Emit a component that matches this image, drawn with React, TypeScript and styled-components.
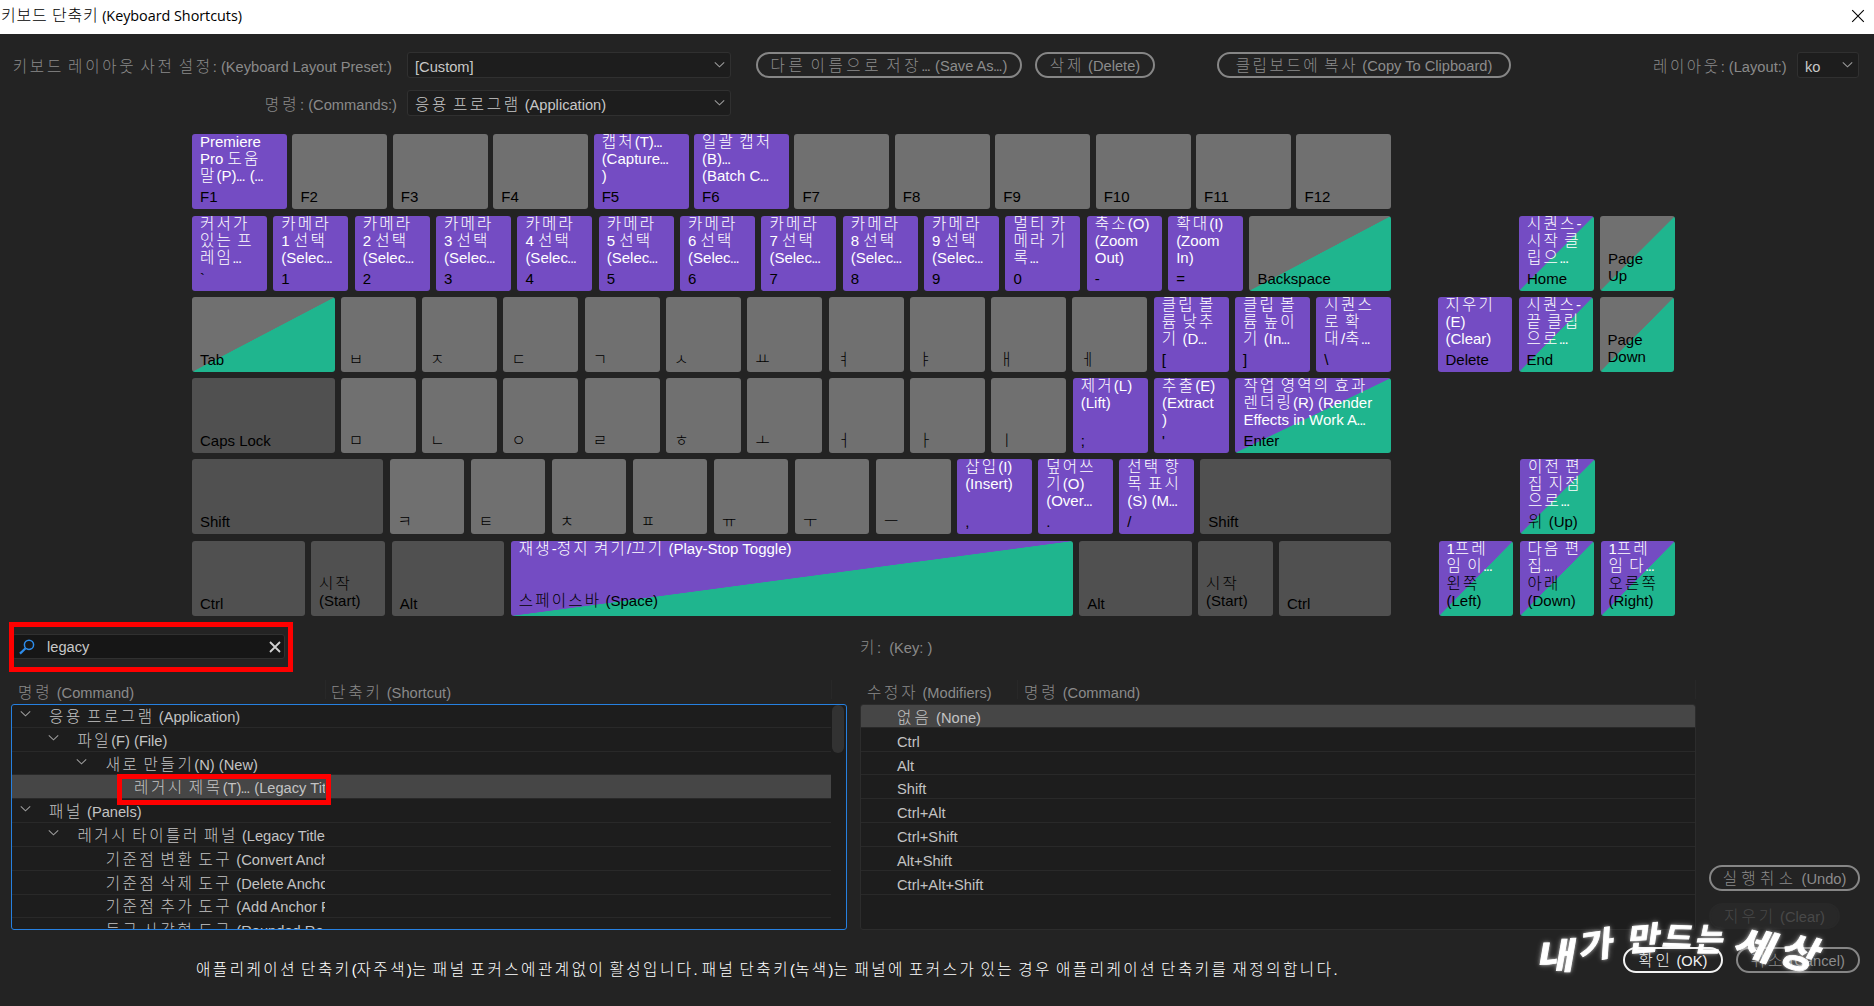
import React from "react";
import styled, { createGlobalStyle } from "styled-components";

const PURPLE = "#744cc3";
const GREEN = "#1fb58e";
const GRAY = "#707070";
const DARK = "#505050";

const Global = createGlobalStyle`
  * { box-sizing: border-box; }
  html, body { margin: 0; padding: 0; background: #232323; overflow: hidden; }
  body { font-family: "Liberation Sans", Arial, "Noto Sans CJK KR", sans-serif; font-size: 14.67px; }
`;

/* ---------- text ---------- */

const Line = styled.span`
  white-space: pre;
`;

const Hangul = styled.span<{ $gap: number }>`
  font-family: "Noto Sans CJK KR", sans-serif;
  font-weight: 300;
  font-size: 15.6px;
  line-height: 0;
  letter-spacing: ${(p) => p.$gap + 0.37}px;
`;

const Dots = styled.span`
  letter-spacing: -1.3px;
  margin: 0 1.3px 0 -0.8px;
`;

function Text({ children, gap = 2.2 }: { children: string; gap?: number }) {
  const parts = children.split(/([\u3130-\u318f\uac00-\ud7a3]+|\.\.\.)/);
  return (
    <Line>
      {parts.map((part, i) => {
        if (i % 2 === 0) return part;
        if (part === "...") return <Dots key={i}>{part}</Dots>;
        return (
          <Hangul key={i} $gap={gap}>
            {part}
          </Hangul>
        );
      })}
    </Line>
  );
}

/* ---------- window ---------- */

const Window = styled.div`
  position: relative;
  width: 1874px;
  height: 1006px;
  background: #232323;
  display: flex;
  flex-direction: column;
  overflow: hidden;
`;

const TitleBar = styled.header`
  height: 34px;
  flex: none;
  background: #fff;
  color: #000;
  display: flex;
  justify-content: space-between;
  align-items: center;
  padding: 0 9px 3px 1px;
  font-family: "Open Sans", "Noto Sans CJK KR", sans-serif;
  font-size: 14.4px;
  letter-spacing: -0.04px;
`;

const TitleHangul = styled.span`
  font-family: "Noto Sans CJK KR", sans-serif;
  font-weight: 300;
  font-size: 16px;
  line-height: 0;
  letter-spacing: 0.8px;
`;

/* ---------- toolbar ---------- */

const Toolbar = styled.section`
  height: 100px;
  flex: none;
  padding-top: 18px;
  display: flex;
  flex-direction: column;
  gap: 12px;
  color: #8a8a8a;
`;

const ToolRow = styled.div`
  display: flex;
  height: 26px;
  align-items: center;
`;

const FieldLabel = styled.label<{ $end: number }>`
  width: 407px;
  padding: 3px ${(p) => p.$end}px 0 0;
  text-align: right;
`;

const Select = styled.div<{ $w: number }>`
  width: ${(p) => p.$w}px;
  height: 26px;
  background: #1d1d1d;
  border: 1px solid #303030;
  border-radius: 3px;
  color: #c8c8c8;
  display: flex;
  align-items: center;
  justify-content: space-between;
  padding: 4px 5px 0 7px;

  svg {
    margin-top: -4px;
  }
`;

const Pill = styled.button<{ $w: number; $tone?: "primary" | "off"; $ml?: number }>`
  flex: none;
  width: ${(p) => p.$w}px;
  height: 26px;
  margin: 0 0 0 ${(p) => p.$ml ?? 0}px;
  padding: 3px 0 0;
  border-radius: 13px;
  border: 2px solid
    ${(p) => (p.$tone === "primary" ? "#f2f2f2" : p.$tone === "off" ? "#282828" : "#868686")};
  background: ${(p) => (p.$tone === "off" ? "#282828" : "transparent")};
  color: ${(p) => (p.$tone === "primary" ? "#f2f2f2" : p.$tone === "off" ? "#484848" : "#8c8c8c")};
  font: inherit;
  line-height: 17px;
  display: flex;
  align-items: center;
  justify-content: center;
`;

const LayoutLabel = styled.span`
  margin-left: 142px;
  width: 144px;
  padding-top: 3px;
`;

function Chevron() {
  return (
    <svg width="11" height="8" viewBox="0 0 11 8" fill="none" stroke="#9a9a9a" strokeWidth="1.1">
      <path d="M0.8 1.3 5.5 5.8 10.2 1.3" />
    </svg>
  );
}

/* ---------- keyboard ---------- */

type Fill = "gray" | "dark" | "purple" | "grayGreen" | "purpleGreen";

interface KeyDef {
  name: string[];
  cmd?: string[];
  w?: number;
  fill?: Fill;
  raised?: boolean;
}

const fills: Record<Fill, string> = {
  gray: GRAY,
  dark: DARK,
  purple: PURPLE,
  grayGreen: `linear-gradient(to bottom right, ${GRAY} 49.8%, ${GREEN} 50.2%)`,
  purpleGreen: `linear-gradient(to bottom right, ${PURPLE} 49.8%, ${GREEN} 50.2%)`,
};

const Keyboard = styled.section`
  height: 482px;
  flex: none;
  padding-left: 192px;
  display: grid;
  grid-template-rows: 82px 81px 81px 81px 82px 75px;
`;

const KeyRow = styled.div`
  display: flex;
  height: 75px;
`;

const MainKeys = styled.div`
  width: 1199.5px;
  display: flex;
  justify-content: space-between;
`;

const NavKeys = styled.div<{ $ml: number }>`
  display: flex;
  gap: 6.5px;
  margin-left: ${(p) => p.$ml}px;
`;

const KeyCap = styled.div<{ $w: number; $fill: Fill; $raised?: boolean }>`
  flex: none;
  width: ${(p) => p.$w}px;
  height: 75px;
  border-radius: 3px;
  background: ${(p) => fills[p.$fill]};
  overflow: hidden;
  padding: 0 0 ${(p) => (p.$raised ? 7 : 4)}px 8px;
  display: flex;
  flex-direction: column;
  justify-content: space-between;
  font-size: 15px;
  line-height: 17px;
`;

const KeyLines = styled.div<{ $ink: string; $up?: number }>`
  display: flex;
  flex-direction: column;
  color: ${(p) => p.$ink};
  margin-top: ${(p) => -(p.$up ?? 0)}px;
`;

function Key({ k, w }: { k: KeyDef; w: number }) {
  return (
    <KeyCap $w={k.w ?? w} $fill={k.fill ?? (k.cmd ? "purple" : "gray")} $raised={k.raised}>
      <KeyLines $ink="#fff" $up={1}>
        {(k.cmd ?? []).map((line) => (
          <Text key={line} gap={1.8}>
            {line}
          </Text>
        ))}
      </KeyLines>
      <KeyLines $ink="#000">
        {k.name.map((line) => (
          <Text key={line} gap={1.8}>
            {line}
          </Text>
        ))}
      </KeyLines>
    </KeyCap>
  );
}

const plain = (names: string): KeyDef[] => names.split(" ").map((n) => ({ name: [n] }));

const camera = (n: number): KeyDef => ({
  name: [String(n)],
  cmd: ["카메라", `${n} 선택`, "(Selec..."],
});

interface RowDef {
  w: number;
  main: KeyDef[];
  nav?: KeyDef[];
  navOffset?: number;
}

const rows: RowDef[] = [
  {
    w: 95,
    main: [
      { name: ["F1"], cmd: ["Premiere", "Pro 도움", "말(P)... (..."] },
      ...plain("F2 F3 F4"),
      { name: ["F5"], cmd: ["캡처(T)...", "(Capture...", ")"] },
      { name: ["F6"], cmd: ["일괄 캡처", "(B)...", "(Batch C..."] },
      ...plain("F7 F8 F9 F10 F11 F12"),
    ],
  },
  {
    w: 75,
    main: [
      { name: ["`"], cmd: ["커서가", "있는 프", "레임..."] },
      ...[1, 2, 3, 4, 5, 6, 7, 8, 9].map(camera),
      { name: ["0"], cmd: ["멀티 카", "메라 기", "록..."] },
      { name: ["-"], cmd: ["축소(O)", "(Zoom", "Out)"] },
      { name: ["="], cmd: ["확대(I)", "(Zoom", "In)"] },
      { name: ["Backspace"], w: 142, fill: "grayGreen" },
    ],
    navOffset: 127.5,
    nav: [
      { name: ["Home"], cmd: ["시퀀스-", "시작 클", "립으..."], fill: "purpleGreen" },
      { name: ["Page", "Up"], fill: "grayGreen", raised: true },
    ],
  },
  {
    w: 75,
    main: [
      { name: ["Tab"], w: 142.5, fill: "grayGreen" },
      ...plain("ㅂ ㅈ ㄷ ㄱ ㅅ ㅛ ㅕ ㅑ ㅐ ㅔ"),
      { name: ["["], cmd: ["클립 볼", "륨 낮추", "기 (D..."] },
      { name: ["]"], cmd: ["클립 볼", "륨 높이", "기 (In..."] },
      { name: ["\\"], cmd: ["시퀀스", "로 확", "대/축..."] },
    ],
    navOffset: 46,
    nav: [
      { name: ["Delete"], cmd: ["지우기", "(E)", "(Clear)"] },
      { name: ["End"], cmd: ["시퀀스-", "끝 클립", "으로..."], fill: "purpleGreen" },
      { name: ["Page", "Down"], fill: "grayGreen", raised: true },
    ],
  },
  {
    w: 75,
    main: [
      { name: ["Caps Lock"], w: 142.5, fill: "dark" },
      ...plain("ㅁ ㄴ ㅇ ㄹ ㅎ ㅗ ㅓ ㅏ ㅣ"),
      { name: [";"], cmd: ["제거(L)", "(Lift)"] },
      { name: ["'"], cmd: ["추출(E)", "(Extract", ")"] },
      {
        name: ["Enter"],
        cmd: ["작업 영역의 효과", "렌더링(R) (Render", "Effects in Work A..."],
        w: 156,
        fill: "purpleGreen",
      },
    ],
  },
  {
    w: 74.5,
    main: [
      { name: ["Shift"], w: 191, fill: "dark" },
      ...plain("ㅋ ㅌ ㅊ ㅍ ㅠ ㅜ ㅡ"),
      { name: [","], cmd: ["삽입(I)", "(Insert)"] },
      { name: ["."], cmd: ["덮어쓰", "기(O)", "(Over..."] },
      { name: ["/"], cmd: ["선택 항", "목 표시", "(S) (M..."] },
      { name: ["Shift"], w: 191, fill: "dark" },
    ],
    navOffset: 128.5,
    nav: [{ name: ["위 (Up)"], cmd: ["이전 편", "집 지점", "으로..."], fill: "purpleGreen" }],
  },
  {
    w: 74.5,
    main: [
      { name: ["Ctrl"], w: 112.5, fill: "dark" },
      { name: ["시작", "(Start)"], fill: "dark", raised: true },
      { name: ["Alt"], w: 112.5, fill: "dark" },
      {
        name: ["스페이스바 (Space)"],
        cmd: ["재생-정지 켜기/끄기 (Play-Stop Toggle)"],
        w: 562,
        fill: "purpleGreen",
        raised: true,
      },
      { name: ["Alt"], w: 112.5, fill: "dark" },
      { name: ["시작", "(Start)"], fill: "dark", raised: true },
      { name: ["Ctrl"], w: 112.5, fill: "dark" },
    ],
    navOffset: 47,
    nav: [
      { name: ["왼쪽", "(Left)"], cmd: ["1프레", "임 이..."], fill: "purpleGreen", raised: true },
      { name: ["아래", "(Down)"], cmd: ["다음 편", "집..."], fill: "purpleGreen", raised: true },
      { name: ["오른쪽", "(Right)"], cmd: ["1프레", "임 다..."], fill: "purpleGreen", raised: true },
    ],
  },
];

/* ---------- lower area ---------- */

const SearchRow = styled.section`
  height: 64px;
  flex: none;
  display: flex;
  align-items: flex-start;
  padding: 18px 0 0 12px;
`;

const SearchBox = styled.div`
  width: 273px;
  height: 25px;
  background: #161616;
  border: 1px solid #303030;
  border-radius: 3px;
  display: flex;
  align-items: center;
  padding: 1px 3px 0 6px;
  color: #c8c8c8;
`;

const SearchValue = styled.span`
  flex: 1;
  margin-left: 12px;
`;

const KeyCaption = styled.span`
  margin-left: 575px;
  padding-top: 6px;
  color: #8a8a8a;
`;

const Lower = styled.section`
  display: flex;
  height: 250px;
  flex: none;
  padding-left: 11px;
`;

const TableBlock = styled.div<{ $w: number; $ml?: number }>`
  width: ${(p) => p.$w}px;
  margin-left: ${(p) => p.$ml ?? 0}px;
  display: flex;
  flex-direction: column;
`;

const HeadRow = styled.div`
  height: 24px;
  display: flex;
  color: #8a8a8a;
  line-height: 27px;
`;

const HeadCell = styled.div<{ $w: number; $pad: number }>`
  width: ${(p) => p.$w}px;
  height: 19px;
  padding-left: ${(p) => p.$pad}px;
  border-right: 1px solid #282828;
`;

const ListBox = styled.div<{ $active?: boolean }>`
  height: 226px;
  border: 1px solid ${(p) => (p.$active ? "#2680e0" : "#2c2c2c")};
  border-radius: 3px;
  background: #1d1d1d;
  overflow: hidden;
  display: flex;
`;

const Rows = styled.div`
  flex: 1;
  margin-top: -1px;
`;

const ListRow = styled.div<{ $on?: boolean }>`
  height: 23.82px;
  border-bottom: 1px solid #292929;
  background: ${(p) => (p.$on ? "#464646" : "transparent")};
  color: #c3c3c3;
  display: flex;
`;

const CommandCell = styled.div<{ $level: number }>`
  width: 313px;
  padding: 3px 0 0 ${(p) => 7.6 + p.$level * 28.3}px;
  overflow: hidden;
  display: flex;
  align-items: center;
`;

const Twisty = styled.span`
  width: 29.5px;
  flex: none;
  display: flex;
  padding-bottom: 6px;
`;

const ModifierCell = styled.div`
  padding: 5px 0 0 36px;
  display: flex;
  align-items: center;
`;

const ScrollTrack = styled.div`
  width: 15px;
  padding: 0 1px;
`;

const ScrollThumb = styled.div`
  width: 12px;
  height: 48px;
  border-radius: 6px;
  background: #323232;
`;

const SideButtons = styled.div`
  margin-left: 13px;
  padding-top: 185px;
  display: flex;
  flex-direction: column;
  gap: 12px;
`;

const Footer = styled.footer`
  display: flex;
  align-items: flex-start;
  padding: 17px 14px 0 196px;
  height: 76px;
`;

const Note = styled.p`
  flex: 1;
  margin: 0;
  padding-top: 14px;
  color: #fff;
  line-height: 18px;
`;

const FooterButtons = styled.div`
  display: flex;
  gap: 12.5px;
`;

/* ---------- overlays ---------- */

const Marker = styled.div<{ $x: number; $y: number; $w: number; $h: number }>`
  position: absolute;
  left: ${(p) => p.$x}px;
  top: ${(p) => p.$y}px;
  width: ${(p) => p.$w}px;
  height: ${(p) => p.$h}px;
  border: 5px solid #f00;
`;

const Signature = styled.div`
  position: absolute;
  left: 0;
  top: 0;
  color: #fff;
  font-family: "Noto Sans CJK KR", sans-serif;
  font-weight: 700;
  -webkit-text-stroke: 0.8px #fff;
  text-shadow: 0 0 3px rgba(255, 255, 255, 0.75), 0 0 6px rgba(255, 255, 255, 0.45);
  filter: blur(0.6px);
`;

const Brush = styled.span<{ $x: number; $y: number; $size: number; $turn: number; $sx: number }>`
  position: absolute;
  left: ${(p) => p.$x}px;
  top: ${(p) => p.$y}px;
  font-size: ${(p) => p.$size}px;
  line-height: 1;
  transform: translate(-50%, -50%) rotate(${(p) => p.$turn}deg) skewX(-12deg) scaleX(${(p) => p.$sx});
`;

const brushes: [string, number, number, number, number, number][] = [
  ["내", 1558, 953, 36, -2, 1.15],
  ["가", 1597, 943, 34, -8, 1.1],
  ["만", 1645, 936, 32, -4, 1.1],
  ["드", 1679, 935, 29, 2, 1.1],
  ["는", 1711, 937, 32, 0, 0.95],
  ["세", 1758, 943, 35, 14, 1.25],
  ["상", 1802, 951, 40, 16, 1],
];

const tree: { label: string; level: number; open?: boolean; on?: boolean }[] = [
  { label: "응용 프로그램 (Application)", level: 0, open: true },
  { label: "파일(F) (File)", level: 1, open: true },
  { label: "새로 만들기(N) (New)", level: 2, open: true },
  { label: "레거시 제목(T)... (Legacy Title)", level: 3, on: true },
  { label: "패널 (Panels)", level: 0, open: true },
  { label: "레거시 타이틀러 패널 (Legacy Titler)", level: 1, open: true },
  { label: "기준점 변환 도구 (Convert Anchor", level: 2 },
  { label: "기준점 삭제 도구 (Delete Anchor", level: 2 },
  { label: "기준점 추가 도구 (Add Anchor Point", level: 2 },
  { label: "둥근 사각형 도구 (Rounded Re", level: 2 },
];

const modifiers = [
  "없음 (None)",
  "Ctrl",
  "Alt",
  "Shift",
  "Ctrl+Alt",
  "Ctrl+Shift",
  "Alt+Shift",
  "Ctrl+Alt+Shift",
];

export default function App() {
  return (
    <>
      <Global />
      <Window>
        <TitleBar>
          <Line>
            <TitleHangul>키보드 단축키</TitleHangul> (Keyboard Shortcuts)
          </Line>
          <svg width="14" height="14" viewBox="0 0 14 14" stroke="#000" strokeWidth="1.1">
            <path d="M1.2 1.2 12.8 12.8M12.8 1.2 1.2 12.8" />
          </svg>
        </TitleBar>

        <Toolbar>
          <ToolRow>
            <FieldLabel $end={15}>
              <Text gap={2.35}>키보드 레이아웃 사전 설정: (Keyboard Layout Preset:)</Text>
            </FieldLabel>
            <Select $w={324}>
              <Text>[Custom]</Text>
              <Chevron />
            </Select>
            <Pill $w={266} $ml={25}>
              <Text gap={3.2}>다른 이름으로 저장... (Save As...)</Text>
            </Pill>
            <Pill $w={120} $ml={13}>
              <Text gap={2.4}>삭제 (Delete)</Text>
            </Pill>
            <Pill $w={294} $ml={62}>
              <Text gap={2.2}>클립보드에 복사 (Copy To Clipboard)</Text>
            </Pill>
            <LayoutLabel>
              <Text gap={2.2}>레이아웃: (Layout:)</Text>
            </LayoutLabel>
            <Select $w={62}>
              <Text>ko</Text>
              <Chevron />
            </Select>
          </ToolRow>
          <ToolRow>
            <FieldLabel $end={10}>
              <Text gap={3}>명령: (Commands:)</Text>
            </FieldLabel>
            <Select $w={324}>
              <Text>응용 프로그램 (Application)</Text>
              <Chevron />
            </Select>
          </ToolRow>
        </Toolbar>

        <Keyboard>
          {rows.map((row, i) => (
            <KeyRow key={i}>
              <MainKeys>
                {row.main.map((k, j) => (
                  <Key key={j} k={k} w={row.w} />
                ))}
              </MainKeys>
              {row.nav && (
                <NavKeys $ml={row.navOffset ?? 0}>
                  {row.nav.map((k, j) => (
                    <Key key={j} k={k} w={74.5} />
                  ))}
                </NavKeys>
              )}
            </KeyRow>
          ))}
        </Keyboard>

        <SearchRow>
          <SearchBox>
            <svg width="16" height="16" viewBox="0 0 16 16" fill="none" stroke="#2d8ceb">
              <circle cx="10" cy="5.8" r="4.6" strokeWidth="1.5" />
              <path d="M6.6 9.2 1 14.6" strokeWidth="2.2" />
            </svg>
            <SearchValue>legacy</SearchValue>
            <svg width="12" height="12" viewBox="0 0 12 12" stroke="#d0d0d0" strokeWidth="1.8">
              <path d="M1 1 11 11M11 1 1 11" />
            </svg>
          </SearchBox>
          <KeyCaption>
            <Text>{"키:  (Key: )"}</Text>
          </KeyCaption>
        </SearchRow>

        <Lower>
          <TableBlock $w={836}>
            <HeadRow>
              <HeadCell $w={315} $pad={7}>
                <Text gap={2.6}>명령 (Command)</Text>
              </HeadCell>
              <HeadCell $w={506} $pad={5}>
                <Text gap={2.5}>단축키 (Shortcut)</Text>
              </HeadCell>
            </HeadRow>
            <ListBox $active>
              <Rows>
                {tree.map((r) => (
                  <ListRow key={r.label} $on={r.on}>
                    <CommandCell $level={r.level}>
                      <Twisty>{r.open && <Chevron />}</Twisty>
                      <Text>{r.label}</Text>
                    </CommandCell>
                  </ListRow>
                ))}
              </Rows>
              <ScrollTrack>
                <ScrollThumb />
              </ScrollTrack>
            </ListBox>
          </TableBlock>

          <TableBlock $w={836} $ml={13}>
            <HeadRow>
              <HeadCell $w={158} $pad={7}>
                <Text gap={2.4}>수정자 (Modifiers)</Text>
              </HeadCell>
              <HeadCell $w={678} $pad={6}>
                <Text gap={2.6}>명령 (Command)</Text>
              </HeadCell>
            </HeadRow>
            <ListBox>
              <Rows>
                {modifiers.map((m, i) => (
                  <ListRow key={m} $on={i === 0}>
                    <ModifierCell>
                      <Text gap={2.8}>{m}</Text>
                    </ModifierCell>
                  </ListRow>
                ))}
              </Rows>
            </ListBox>
          </TableBlock>

          <SideButtons>
            <Pill $w={151}>
              <Text gap={4}>실행취소 (Undo)</Text>
            </Pill>
            <Pill $w={131} $tone="off">
              <Text gap={2.6}>지우기 (Clear)</Text>
            </Pill>
          </SideButtons>
        </Lower>

        <Footer>
          <Note>
            <Text gap={2.12}>
              애플리케이션 단축키(자주색)는 패널 포커스에관계없이 활성입니다. 패널 단축키(녹색)는 패널에 포커스가 있는 경우 애플리케이션 단축키를 재정의합니다.
            </Text>
          </Note>
          <FooterButtons>
            <Pill $w={100} $tone="primary">
              <Text>확인 (OK)</Text>
            </Pill>
            <Pill $w={124.5}>
              <Text gap={2.6}>취소 (Cancel)</Text>
            </Pill>
          </FooterButtons>
        </Footer>

        <Marker $x={9} $y={622} $w={284} $h={50} />
        <Marker $x={117} $y={774} $w={214} $h={31} />
        <Signature>
          {brushes.map(([ch, x, y, size, turn, sx], i) => (
            <Brush key={i} $x={x} $y={y} $size={size} $turn={turn} $sx={sx}>
              {ch}
            </Brush>
          ))}
        </Signature>
      </Window>
    </>
  );
}
